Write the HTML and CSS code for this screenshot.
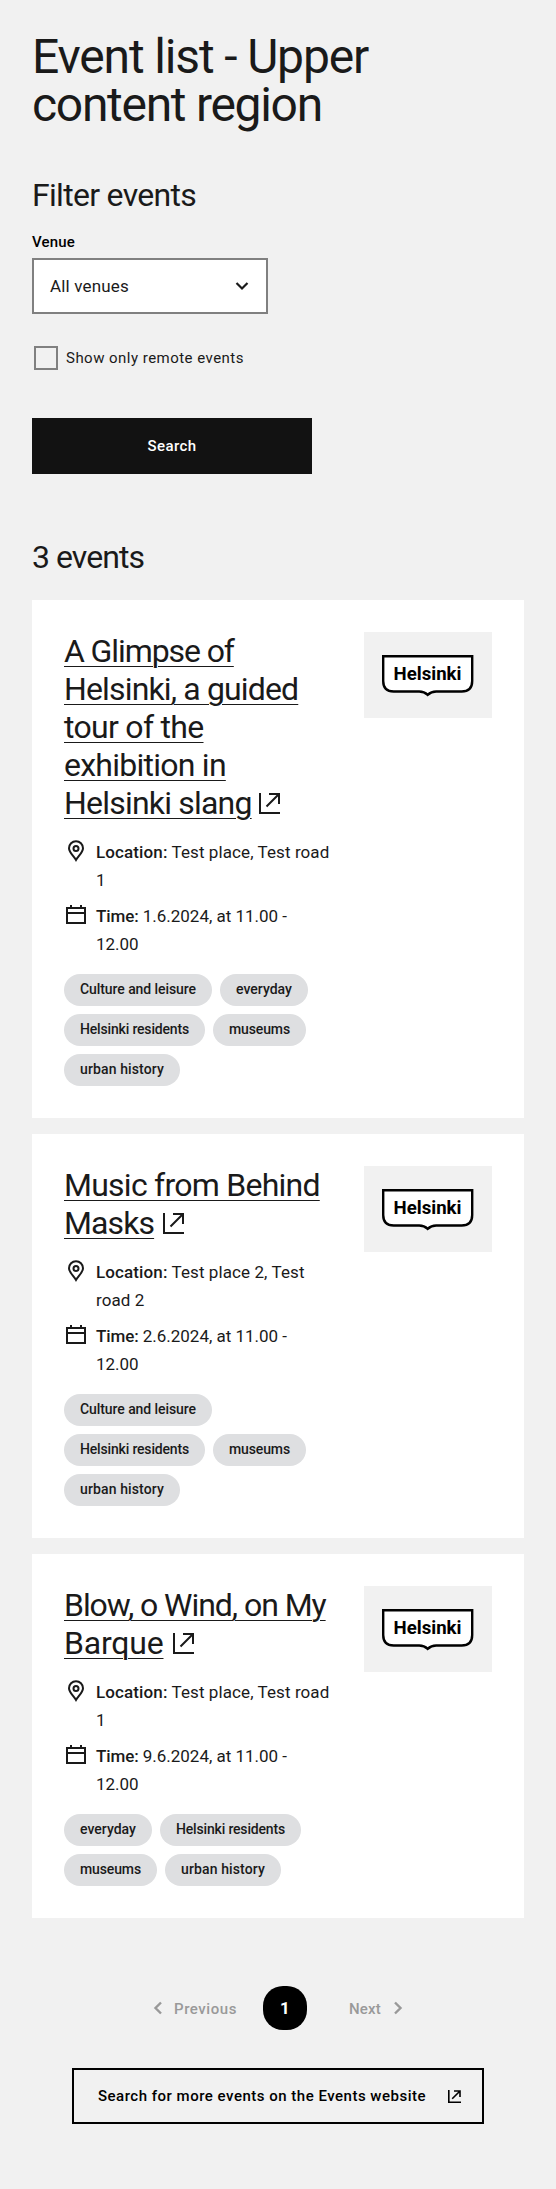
FILE: index.html
```html
<!DOCTYPE html>
<html lang="en">
<head>
<meta charset="utf-8">
<title>Event list</title>
<link rel="stylesheet" href="styles.css">
</head>
<body>
<svg class="sprite" aria-hidden="true">
  <symbol id="i-ext" viewBox="0 0 21 21"><path d="M1 0v20h20M10 1h10v10M20 1 7.500 13.500" fill="none" stroke="currentColor" stroke-width="2"/></symbol>
  <symbol id="i-pin" viewBox="0 0 24 24"><path d="M12 22C9.500 18 5 14.200 5 10.200a7 7 0 0 1 14 0C19 14.200 14.500 18 12 22z" fill="none" stroke="currentColor" stroke-width="2"/><circle cx="12" cy="10.500" r="2.500" fill="none" stroke="currentColor" stroke-width="2"/></symbol>
  <symbol id="i-cal" viewBox="0 0 24 24"><path d="M3 6h18v15H3zM3 11h18M7 3v3M17 3v3" fill="none" stroke="currentColor" stroke-width="2"/></symbol>
  <symbol id="i-shield" viewBox="0 0 128 86"><path d="M19.200 24.200h89V49q0 10.500-10.500 10.500H72.200q-5 0-8.500 3.300-3.500-3.300-8.500-3.300H29.700Q19.200 59.500 19.200 49z" fill="#fff" stroke="#000" stroke-width="2.400"/></symbol>
</svg>
<main class="page">
  <h1 class="page-title"><span class="t-upper">Event list - Upper</span><br><span class="t-region">content region</span></h1>

  <form class="filters">
    <h2 class="heading filter-heading">Filter events</h2>
    <label class="field-label">Venue</label>
    <div class="select"><span>All venues</span>
      <svg class="chevron" viewBox="0 0 14 10"><path d="M1.500 2 7 7.500 12.500 2" fill="none" stroke="currentColor" stroke-width="2.200"/></svg>
    </div>
    <label class="check"><span class="box"></span><span>Show only remote events</span></label>
    <button type="button" class="search">Search</button>
  </form>

  <h2 class="heading count-heading">3 events</h2>

  <div class="cards">
    <article class="card">
      <div class="info">
        <h3 class="title"><a><span class="l-glimpse">A Glimpse of</span><br><span class="l-guided">Helsinki, a guided</span><br><span class="l-tour">tour of the</span><br><span class="l-exhibition">exhibition in</span><br><span class="l-slang">Helsinki slang</span></a><svg class="ext ext-slang"><use href="#i-ext"/></svg></h3>
        <div class="meta"><svg><use href="#i-pin"/></svg><p><b class="k-loc">Location:</b> Test place, Test road<br>1</p></div>
        <div class="meta time"><svg><use href="#i-cal"/></svg><p><b class="k-time">Time:</b> 1.6.2024, at 11.00 -<br>12.00</p></div>
        <ul class="tags"><li class="culture">Culture and leisure</li><li class="everyday">everyday</li><li class="residents">Helsinki residents</li><li class="museums">museums</li><li class="urban">urban history</li></ul>
      </div>
      <div class="picture"><svg><use href="#i-shield"/><text x="29.500" y="48" textLength="68" lengthAdjust="spacingAndGlyphs" class="logo-text">Helsinki</text></svg></div>
    </article>
    <article class="card">
      <div class="info">
        <h3 class="title"><a><span class="l-music">Music from Behind</span><br><span class="l-masks">Masks</span></a><svg class="ext"><use href="#i-ext"/></svg></h3>
        <div class="meta"><svg><use href="#i-pin"/></svg><p><b class="k-loc">Location:</b> Test place 2, Test<br>road 2</p></div>
        <div class="meta time"><svg><use href="#i-cal"/></svg><p><b class="k-time">Time:</b> 2.6.2024, at 11.00 -<br>12.00</p></div>
        <ul class="tags"><li class="culture">Culture and leisure</li><li class="residents">Helsinki residents</li><li class="museums">museums</li><li class="urban">urban history</li></ul>
      </div>
      <div class="picture"><svg><use href="#i-shield"/><text x="29.500" y="48" textLength="68" lengthAdjust="spacingAndGlyphs" class="logo-text">Helsinki</text></svg></div>
    </article>
    <article class="card">
      <div class="info">
        <h3 class="title"><a><span class="l-blow">Blow, o Wind, on My</span><br><span class="l-barque">Barque</span></a><svg class="ext"><use href="#i-ext"/></svg></h3>
        <div class="meta"><svg><use href="#i-pin"/></svg><p><b class="k-loc">Location:</b> Test place, Test road<br>1</p></div>
        <div class="meta time"><svg><use href="#i-cal"/></svg><p><b class="k-time">Time:</b> 9.6.2024, at 11.00 -<br>12.00</p></div>
        <ul class="tags"><li class="everyday">everyday</li><li class="residents">Helsinki residents</li><li class="museums">museums</li><li class="urban">urban history</li></ul>
      </div>
      <div class="picture"><svg><use href="#i-shield"/><text x="29.500" y="48" textLength="68" lengthAdjust="spacingAndGlyphs" class="logo-text">Helsinki</text></svg></div>
    </article>
  </div>

  <nav class="pager">
    <svg class="arrow" viewBox="0 0 10 14"><path d="M8 1.500 2.500 7 8 12.500" fill="none" stroke="currentColor" stroke-width="2.400"/></svg>
    <span class="prev">Previous</span>
    <span class="current">1</span>
    <span class="next">Next</span>
    <svg class="arrow" viewBox="0 0 10 14"><path d="M2 1.500 7.500 7 2 12.500" fill="none" stroke="currentColor" stroke-width="2.400"/></svg>
  </nav>
  <a class="more"><span>Search for more events on the Events website</span><svg viewBox="0 0 13 13"><path d="M.8 0v12.200H13M6 1h6v6M12 1 4.200 8.800" fill="none" stroke="currentColor" stroke-width="1.600"/></svg></a>
</main>
</body>
</html>
```
FILE: styles.css
```css
* { box-sizing: border-box; }
body { margin: 0; background: #f1f1f1; color: #1a1a1a; font-family: Roboto, "Liberation Sans", sans-serif; }
h1, h2, h3, p, ul { margin: 0; padding: 0; font-weight: 400; }
.sprite { display: block; width: 0; height: 0; }
.page { width: 556px; min-height: 2189px; padding: 33px 32px 65px; }

.page-title { font-size: 48px; line-height: 48px; white-space: nowrap; }
.t-upper { letter-spacing: -1.15px; }
.t-region { letter-spacing: -1.3px; }
.heading { font-size: 32px; line-height: 40px; letter-spacing: -0.7px; }
.filter-heading { margin-top: 46px; }
.count-heading { margin: 63px 0 23px; letter-spacing: -0.95px; }

.field-label { display: block; margin: 15px 0 4px; font-size: 15px; font-weight: 500; line-height: 24px; letter-spacing: 0.18px; color: #000; }
.select { display: flex; align-items: center; justify-content: space-between; width: 236px; height: 56px; padding: 0 17px 0 16px; border: 2px solid #808080; background: #fff; font-size: 17px; letter-spacing: 0.17px; }
.chevron { width: 14px; height: 10px; }
.check { display: flex; align-items: center; gap: 8px; height: 24px; margin: 32px 0 48px 2px; font-size: 15px; letter-spacing: 0.47px; }
.box { width: 24px; height: 24px; border: 2px solid #808080; }
.search { display: block; width: 280px; height: 56px; padding: 0; border: 0; background: #121212; color: #fff; font: 500 15px Roboto, "Liberation Sans", sans-serif; letter-spacing: 0.4px; }

.cards { display: flex; flex-direction: column; gap: 16px; }
.card { display: flex; justify-content: space-between; padding: 32px; background: #fff; }
.info { width: 268px; }
.title { font-size: 32px; line-height: 38px; white-space: nowrap; }
.title a { text-decoration: underline; text-decoration-thickness: 1px; text-underline-offset: 4px; }
.l-glimpse { letter-spacing: -1.1px; }
.l-guided { letter-spacing: -0.85px; }
.l-tour { letter-spacing: -0.7px; }
.l-exhibition { letter-spacing: -0.75px; }
.l-slang { letter-spacing: -0.8px; }
.l-music { letter-spacing: -0.75px; }
.l-masks { letter-spacing: -0.9px; }
.l-blow { letter-spacing: -1.05px; }
.l-barque { letter-spacing: -0.2px; }
.ext { width: 21px; height: 21px; margin-left: 9px; vertical-align: baseline; }
.ext-slang { margin-left: 7px; }

.meta { display: flex; gap: 8px; margin-top: 16px; }
.meta + .meta { margin-top: 8px; }
.meta svg { flex: none; width: 24px; height: 24px; }
.meta p { font-size: 17px; line-height: 28px; letter-spacing: 0.09px; white-space: nowrap; }
.time p { letter-spacing: -0.02px; }
.meta b { font-weight: 500; }
.k-loc { letter-spacing: 0.12px; }
.k-time { letter-spacing: -0.1px; }

.tags { display: flex; flex-wrap: wrap; gap: 8px; margin-top: 16px; list-style: none; }
.tags li { height: 32px; border-radius: 16px; background: #dedfe1; font-size: 14px; font-weight: 500; line-height: 31px; text-align: center; white-space: nowrap; }
.tags .culture { width: 148px; letter-spacing: -0.07px; }
.tags .everyday { width: 88px; }
.tags .residents { width: 141px; letter-spacing: -0.17px; }
.tags .museums { width: 93px; letter-spacing: -0.12px; }
.tags .urban { width: 116px; letter-spacing: 0.13px; }

.picture { width: 128px; height: 86px; background: #f1f1f1; }
.picture svg { display: block; width: 128px; height: 86px; }
.logo-text { font: 700 17.5px Roboto, "Liberation Sans", sans-serif; fill: #000; }

.pager { display: flex; align-items: center; height: 44px; margin: 68px 0 38px 121px; color: #999; font-size: 15px; font-weight: 500; }
.arrow { width: 10px; height: 14px; }
.prev { width: 64px; margin: 2px 25px 0 11px; letter-spacing: 0.56px; }
.current { width: 44px; height: 44px; border-radius: 20px; background: #000; color: #fff; font-size: 17px; font-weight: 700; line-height: 44px; text-align: center; }
.next { width: 33px; margin: 2px 11px 0 42px; letter-spacing: 0.2px; }
.more { display: flex; align-items: center; justify-content: space-between; width: 412px; height: 56px; margin: 0 auto; padding: 0 21px 0 24px; border: 2px solid #000; color: #000; font-size: 15px; font-weight: 500; letter-spacing: 0.5px; white-space: nowrap; }
.more svg { width: 13px; height: 13px; }
```
